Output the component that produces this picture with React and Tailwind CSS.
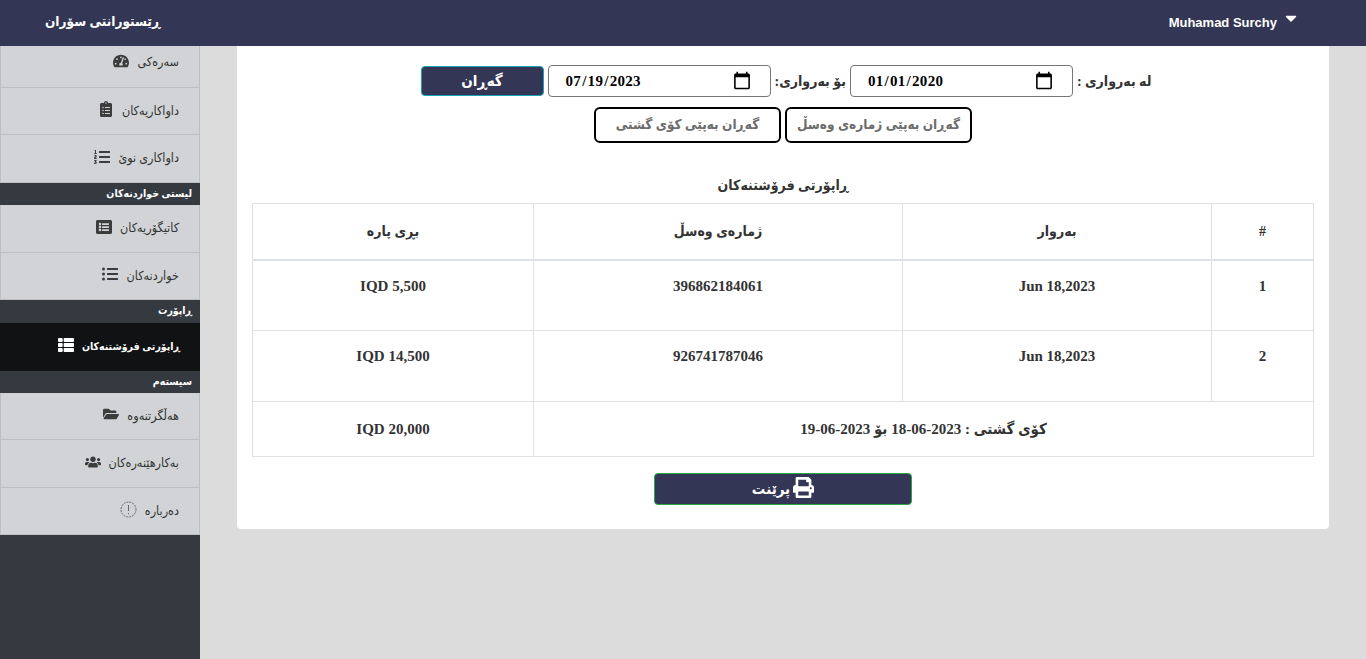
import React from "react";
import { FaTachometerAlt, FaClipboardList, FaListOl, FaListAlt, FaListUl, FaThList, FaFolderOpen, FaUsers, FaPrint, FaCaretDown } from "react-icons/fa";

const AboutIcon = () => (
  <svg width="17" height="17" viewBox="0 0 17 17" fill="none" stroke="#666" strokeWidth="1">
    <circle cx="8.5" cy="8.5" r="7.5" strokeDasharray="2 1" />
    <path d="M8.5 4v6M8.5 12v1.2" />
  </svg>
);

const Item = ({ label, icon, active, className = "" }) => (
  <div
    className={`h-12 flex items-center pr-5 gap-2 ${className} ${
      active ? "bg-[#111214] text-white font-bold text-[10.5px]" : "bg-[#d1d3d6] text-[#333] text-[12.5px] border border-t-0 border-[#bdbfc2]"
    }`}
  >
    <span>{label}</span>
    <span className={`-mt-1 text-[16px] [&>svg]:w-auto ${active ? "text-white" : "text-[#3c3c3c]"}`}>{icon}</span>
  </div>
);

const Heading = ({ label, className = "" }) => (
  <div className={`h-[22px] bg-[#343a40] text-white text-[10.5px] font-bold pr-2 leading-[22px] ${className}`}>{label}</div>
);

const rows = [
  { id: 1, date: "Jun 18,2023", invoice: "396862184061", amount: "IQD 5,500" },
  { id: 2, date: "Jun 18,2023", invoice: "926741787046", amount: "IQD 14,500" },
];

const dateClass =
  "w-[223px] h-8 border border-[#767676] rounded-sm pl-4 pr-[18px] text-[15px] tracking-[0.3px] font-bold text-black [&::-webkit-calendar-picker-indicator]:w-5 [&::-webkit-calendar-picker-indicator]:h-5 [&::-webkit-calendar-picker-indicator]:m-0 [&::-webkit-calendar-picker-indicator]:p-0";

export default function App() {
  return (
    <div className="h-[659px] overflow-hidden bg-[#dcdcdc] flex flex-col font-['Liberation_Serif','DejaVu_Sans_Condensed','DejaVu_Sans',serif]">
      <header className="h-[46px] shrink-0 bg-[#333654] text-white flex items-center justify-between pl-[45px] pr-[66px]">
        <span dir="rtl" className="text-[13.5px] font-bold -mt-0.5">ڕێستورانتی سۆران</span>
        <span className="flex items-start gap-[5px] text-[13px] font-bold font-['Liberation_Sans','DejaVu_Sans',sans-serif]">
          Muhamad Surchy
          <FaCaretDown className="text-[18px] -mt-1" />
        </span>
      </header>
      <div className="flex-1 flex min-h-0">
        <aside dir="rtl" className="w-[200px] shrink-0 bg-[#343a40]">
          <Item label="سەرەکی" icon={<FaTachometerAlt />} className="h-[42px] pb-2" />
          <Item label="داواکاریەکان" icon={<FaClipboardList />} className="h-[47px]" />
          <Item label="داواکاری نوێ" icon={<FaListOl />} />
          <Heading label="لیستی خواردنەکان" />
          <Item label="کاتیگۆریەکان" icon={<FaListAlt />} />
          <Item label="خواردنەکان" icon={<FaListUl />} className="h-[47px]" />
          <Heading label="ڕاپۆرت" className="h-[23px]" />
          <Item label="ڕاپۆرتی فرۆشتنەکان" icon={<FaThList />} active />
          <Heading label="سیستەم" />
          <Item label="هەڵگرتنەوە" icon={<FaFolderOpen />} className="h-[47px]" />
          <Item label="بەکارهێنەرەکان" icon={<FaUsers />} />
          <Item label="دەربارە" icon={<AboutIcon />} className="h-[47px]" />
        </aside>
        <main dir="rtl" className="flex-1 px-[37px]">
          <div className="bg-white h-[483px] rounded-b px-[15px] pt-[19px]">
            <div className="flex justify-center items-center gap-1 text-[#333] font-bold text-[14px] pl-[6px]">
              <span>له بەرواری :</span>
              <input dir="ltr" type="date" defaultValue="2020-01-01" className={dateClass} />
              <span>بۆ بەرواری:</span>
              <input dir="ltr" type="date" defaultValue="2023-07-19" className={dateClass} />
              <button className="w-[123px] h-[30px] bg-[#333654] border border-[#17a2b8] rounded text-white font-bold text-[15px]">گەڕان</button>
            </div>
            <div className="flex justify-center gap-1 mt-[10px]">
              <button className="h-9 w-[187px] whitespace-nowrap border-2 border-black rounded-md text-[#6c6c6c] font-bold text-[13.5px]">گەڕان بەپێی ژمارەی وەسڵ</button>
              <button className="h-9 w-[187px] whitespace-nowrap border-2 border-black rounded-md text-[#6c6c6c] font-bold text-[13.5px]">گەڕان بەپێی کۆی گشتی</button>
            </div>
            <h2 className="text-center mt-[33px] mb-[7px] text-[14px] font-bold text-[#333] leading-[20px]">ڕاپۆرتی فرۆشتنەکان</h2>
            <table className="w-[1062px] border-collapse text-[15px] font-bold text-[#333] table-fixed">
              <thead>
                <tr className="h-[56px] border-b-2 border-[#dee2e6]">
                  <th className="w-[102px] border border-[#dee2e6] text-[14px]">#</th>
                  <th className="w-[309px] border border-[#dee2e6] text-[14px]">بەروار</th>
                  <th className="w-[369px] border border-[#dee2e6] text-[14px]">ژمارەی وەسڵ</th>
                  <th className="border border-[#dee2e6] text-[14px]">بڕی پارە</th>
                </tr>
              </thead>
              <tbody>
                {rows.map((r) => (
                  <tr key={r.id} className="h-[71px]">
                    <td className="border border-[#dee2e6] text-center align-top pt-[14px]">{r.id}</td>
                    <td className="border border-[#dee2e6] text-center align-top pt-[14px]">{r.date}</td>
                    <td className="border border-[#dee2e6] text-center align-top pt-[14px]">{r.invoice}</td>
                    <td className="border border-[#dee2e6] text-center align-top pt-[14px]">{r.amount}</td>
                  </tr>
                ))}
                <tr className="h-[55px]">
                  <td colSpan={3} className="border border-[#dee2e6] text-center">کۆی گشتی : 2023-06-18 بۆ 2023-06-19</td>
                  <td className="border border-[#dee2e6] text-center">IQD 20,000</td>
                </tr>
              </tbody>
            </table>
            <div className="flex justify-center mt-4">
              <button className="w-[258px] h-8 bg-[#333654] border border-[#28a745] rounded-sm text-white font-bold text-[15px] flex items-center justify-center gap-[3px]">
                <FaPrint className="text-[21px] -mt-1" />
                پرێنت
              </button>
            </div>
          </div>
        </main>
      </div>
    </div>
  );
}
